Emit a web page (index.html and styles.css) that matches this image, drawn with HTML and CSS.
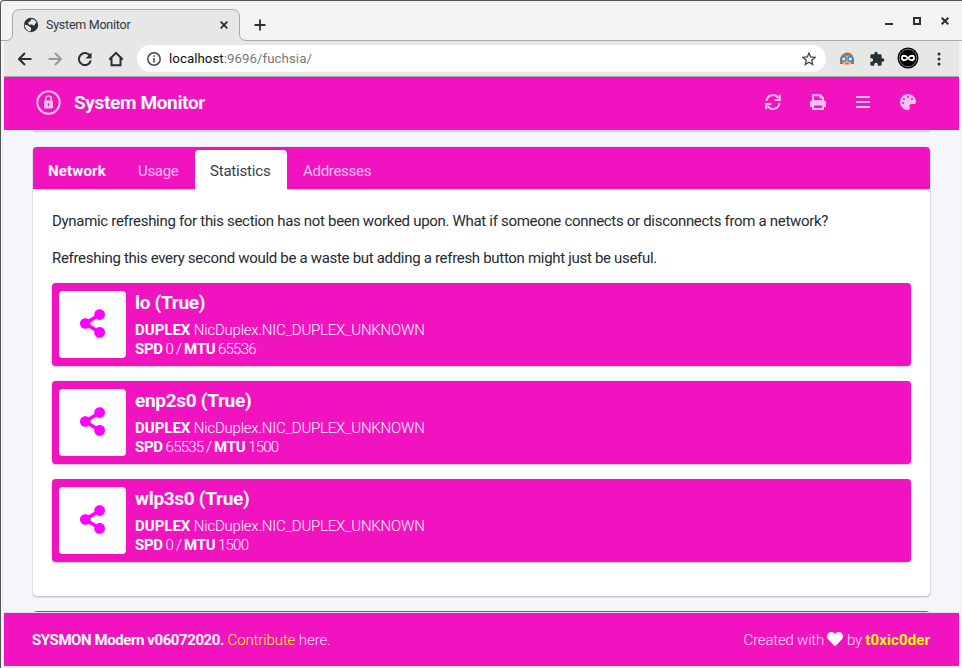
FILE: index.html
```html
<!DOCTYPE html>
<html lang="en">
<head>
<meta charset="utf-8">
<title>System Monitor</title>
<link rel="stylesheet" href="styles.css">
</head>
<body>
<div class="window">
  <div class="tabstrip">
    <svg class="tab-shape" width="252" height="37" viewBox="0 0 252 37"><path class="tab-fill" d="M0 37V31.500H2Q8.500 31.500 8.500 25V8Q8.500 .5 16 .5H228Q235.500 .5 235.500 8V25Q235.500 31.500 243 31.500V32H0Z"/><path class="tab-line" d="M0 31.500H2Q8.500 31.500 8.500 25V8Q8.500 .5 16 .5H228Q235.500 .5 235.500 8V25Q235.500 31.500 243 31.500H252"/></svg>
    <div class="tab">
      <svg class="globe" width="16" height="16" viewBox="0 0 16 16"><circle cx="8" cy="8" r="7.200"/><path d="M8.500 1.700Q12 2.500 13.500 5L11 8.800L9 7.500L6 7.700L5 5.500L7.500 4Z M1.600 7.500L5 8.500L8.300 11L7.500 14.400Q2 13.500 1.600 7.500Z"/></svg>
      <span>System Monitor</span>
      <svg class="tab-close" width="8" height="8" viewBox="0 0 8 8"><path d="M.7.7l6.600 6.600M7.300.7L.7 7.300"/></svg>
    </div>
    <svg class="plus" width="12" height="12" viewBox="0 0 12 12"><path d="M6 .5v11M.5 6h11"/></svg>
    <div class="controls">
      <svg width="8" height="10" viewBox="0 0 8 10"><path d="M0 8h8"/></svg>
      <svg width="8" height="8" viewBox="0 0 8 8"><path d="M1 1h6v6H1z"/></svg>
      <svg width="8" height="8" viewBox="0 0 8 8"><path d="M.7.7l6.600 6.600M7.300.7L.7 7.300"/></svg>
    </div>
  </div>
  <div class="toolbar">
    <svg class="nav" width="14" height="14" viewBox="0 0 14 14"><path d="M13.500 7H1.500M7 1L1 7l6 6"/></svg>
    <svg class="nav dim" width="14" height="14" viewBox="0 0 14 14"><path d="M.5 7h12M7 1l6 6-6 6"/></svg>
    <svg class="nav" width="14" height="14" viewBox="0 0 14 14"><path d="M12 3.800A6 6 0 1 0 12.800 8.500"/><path class="solid" d="M13.500.5v6h-6z"/></svg>
    <svg class="nav home" width="16" height="16" viewBox="0 0 16 16"><path d="M1.300 8.500L8 1.800l6.700 6.700M3.500 7V14.200h9V7"/></svg>
    <div class="url">
      <svg width="14" height="14" viewBox="0 0 14 14"><circle cx="7" cy="7" r="6.200"/><path d="M7 6v4.500M7 3.300v1.500"/></svg>
      <span><b>localhost</b>:9696/fuchsia/</span>
      <svg class="star" width="14" height="14" viewBox="0 0 14 14"><path d="M7 1l1.700 4 4.300.4-3.300 2.800 1 4.300L7 10.200l-3.700 2.300 1-4.300L1 5.400 5.300 5z"/></svg>
    </div>
    <svg class="ext" width="16" height="16" viewBox="0 0 16 16"><path d="M1 13Q.5 2 8 1.500T15 13z" fill="#a96b18"/><ellipse cx="8" cy="9.500" rx="5.200" ry="5" fill="#f3ad80"/><path d="M2.500 6.500L8 3l5.500 3.500V5Q8 0 2.500 5z" fill="#c48429"/><circle cx="4.500" cy="8" r="3.200" fill="#3583d0"/><circle cx="11.500" cy="8" r="3.200" fill="#3583d0"/><circle cx="4.700" cy="8" r="1.700" fill="#c8ebff"/><circle cx="11.300" cy="8" r="1.700" fill="#c8ebff"/><path d="M6.500 12.500h3" stroke="#c75b4b"/></svg>
    <svg class="puzzle" width="16" height="16" viewBox="0 0 24 24"><path d="M20.500 11H19V7c0-1.100-.9-2-2-2h-4V3.500a2.500 2.500 0 0 0-5 0V5H4c-1.100 0-2 .9-2 2v3.800h1.500a2.700 2.700 0 0 1 0 5.400H2V20c0 1.100.9 2 2 2h3.800v-1.500a2.700 2.700 0 0 1 5.400 0V22H17c1.100 0 2-.9 2-2v-4h1.500a2.500 2.500 0 0 0 0-5z"/></svg>
    <svg class="avatar" width="22" height="22" viewBox="0 0 22 22"><circle cx="11" cy="11" r="10.500"/><circle class="ring" cx="11" cy="11" r="8.800"/><path d="M11 11C8.500 8 5 8 5 11s3.500 3 6 0 6-3 6 0-3.500 3-6 0z"/></svg>
    <svg class="dots" width="4" height="14" viewBox="0 0 4 14"><circle cx="2" cy="2" r="1.500"/><circle cx="2" cy="7" r="1.500"/><circle cx="2" cy="12" r="1.500"/></svg>
  </div>
  <div class="page">
    <header class="topbar">
      <svg class="lock" width="26" height="26" viewBox="0 0 26 26"><circle cx="12.500" cy="12.500" r="11.200"/><path class="shackle" d="M9.700 12V8.800a2.800 2.800 0 0 1 5.600 0V12"/><path class="body" fill-rule="evenodd" d="M9 10.500h7q1 0 1 1v6q0 1-1 1H9q-1 0-1-1v-6q0-1 1-1zm2.800 2.700v2.500h1.400v-2.500z"/></svg>
      <h1>System Monitor</h1>
      <div class="actions">
        <svg width="16" height="16" viewBox="0 0 16 16"><path class="line" d="M1.500 7A6.500 6.500 0 0 1 13.500 4.200M14.500 9A6.500 6.500 0 0 1 2.500 11.800M14.800.8v5.200H9.600M1.200 15.200V10h5.200"/></svg>
        <svg width="16" height="16" viewBox="0 0 16 16"><path class="line" d="M3 7V1.300h7.500L13 3.800V7M3 12H1V9q0-1.800 1.800-1.800h10.400Q15 7.200 15 9v3h-2M3 10.500h10v4.500H3z"/><path d="M2 6.500h12l1.500 2V11H.5V8.500zM9.500 1l3.500 3.500H9.500z"/></svg>
        <svg width="16" height="16" viewBox="0 0 16 16"><path class="line" d="M1 3h14M1 8h14M1 13h14"/></svg>
        <svg width="16" height="16" viewBox="0 0 512 512"><path fill-rule="evenodd" d="M204.300 5C104.900 24.400 24.800 104.300 5.200 203.400c-37 187 131.700 326.400 258.800 306.700 41.200-6.400 61.400-54.600 42.500-91.700-23.100-45.400 9.900-98.400 60.900-98.400h79.700c35.800 0 64.800-29.600 64.900-65.300C511.500 97.100 368.100-26.900 204.300 5zM96 320a32 32 0 1 1 0-64 32 32 0 0 1 0 64zm32-128a32 32 0 1 1 0-64 32 32 0 0 1 0 64zm128-64a32 32 0 1 1 0-64 32 32 0 0 1 0 64zm128 64a32 32 0 1 1 0-64 32 32 0 0 1 0 64z"/></svg>
      </div>
    </header>
    <main>
      <div class="previous-card"></div>
      <section class="card">
        <nav><strong>Network</strong><a class="usage">Usage</a><a class="active">Statistics</a><a class="addresses">Addresses</a></nav>
        <div class="card-body">
          <p class="first">Dynamic refreshing for this section has not been worked upon. What if someone connects or disconnects from a network?</p>
          <p class="second">Refreshing this every second would be a waste but adding a refresh button might just be useful.</p>
          <article><div class="thumb"><svg width="25" height="29" viewBox="0 0 448 512"><path d="M352 320c-22.600 0-43.400 7.800-59.800 20.900l-102.500-64a96.500 96.500 0 0 0 0-41.700l102.500-64.100C308.600 184.200 329.400 192 352 192c53 0 96-43 96-96S405 0 352 0s-96 43-96 96c0 7.200.8 14.100 2.300 20.800l-102.500 64.100C139.400 167.800 118.600 160 96 160c-53 0-96 43-96 96s43 96 96 96c22.600 0 43.400-7.800 59.800-20.900l102.500 64.100A96.300 96.300 0 0 0 256 416c0 53 43 96 96 96s96-43 96-96-43-96-96-96z"/></svg></div><div class="info"><h2>lo (True)</h2><div class="row duplex"><b>DUPLEX</b> NicDuplex.NIC_DUPLEX_UNKNOWN</div><div class="row speed"><b>SPD</b> 0 / <b>MTU</b> 65536</div></div></article>
          <article><div class="thumb"><svg width="25" height="29" viewBox="0 0 448 512"><path d="M352 320c-22.600 0-43.400 7.800-59.800 20.900l-102.500-64a96.500 96.500 0 0 0 0-41.700l102.500-64.100C308.600 184.200 329.400 192 352 192c53 0 96-43 96-96S405 0 352 0s-96 43-96 96c0 7.200.8 14.100 2.300 20.800l-102.500 64.100C139.400 167.800 118.600 160 96 160c-53 0-96 43-96 96s43 96 96 96c22.600 0 43.400-7.800 59.800-20.900l102.500 64.100A96.300 96.300 0 0 0 256 416c0 53 43 96 96 96s96-43 96-96-43-96-96-96z"/></svg></div><div class="info"><h2>enp2s0 (True)</h2><div class="row duplex"><b>DUPLEX</b> NicDuplex.NIC_DUPLEX_UNKNOWN</div><div class="row speed"><b>SPD</b> 65535 / <b>MTU</b> 1500</div></div></article>
          <article><div class="thumb"><svg width="25" height="29" viewBox="0 0 448 512"><path d="M352 320c-22.600 0-43.400 7.800-59.800 20.900l-102.500-64a96.500 96.500 0 0 0 0-41.700l102.500-64.100C308.600 184.200 329.400 192 352 192c53 0 96-43 96-96S405 0 352 0s-96 43-96 96c0 7.200.8 14.100 2.300 20.800l-102.500 64.100C139.400 167.800 118.600 160 96 160c-53 0-96 43-96 96s43 96 96 96c22.600 0 43.400-7.800 59.800-20.900l102.500 64.100A96.300 96.300 0 0 0 256 416c0 53 43 96 96 96s96-43 96-96-43-96-96-96z"/></svg></div><div class="info"><h2>wlp3s0 (True)</h2><div class="row duplex"><b>DUPLEX</b> NicDuplex.NIC_DUPLEX_UNKNOWN</div><div class="row speed"><b>SPD</b> 0 / <b>MTU</b> 1500</div></div></article>
        </div>
      </section>
      <div class="next-card"></div>
    </main>
    <footer>
      <div class="version"><b>SYSMON Modern v06072020.</b> <a>Contribute</a> here.</div>
      <div class="credit">Created with <svg width="16" height="16" viewBox="0 0 512 512"><path d="M462.300 62.600C407.500 15.900 326 24.300 275.700 76.200L256 96.500l-19.700-20.300C186.100 24.300 104.500 15.900 49.700 62.600c-62.800 53.600-66.100 149.800-9.900 207.900l193.500 199.800c12.500 12.900 32.800 12.900 45.300 0l193.500-199.800c56.300-58.100 53-154.300-9.800-207.900z"/></svg> by <a><b>t0xic0der</b></a></div>
    </footer>
  </div>
</div>
</body>
</html>
```
FILE: styles.css
```css
* { box-sizing: border-box; }
body { margin: 0; background: #f2f2f2; font-family: Roboto, "Liberation Sans", sans-serif; }
svg { display: block; flex: none; }
.window { width: 962px; height: 668px; overflow: hidden; display: flex; flex-direction: column; border-top: 1px solid #555; border-left: 1px solid #555; border-radius: 4px 0 0 0; padding: 0 3px 2px 3px; background: #f3f3f3; }
.tabstrip { height: 40px; flex: none; position: relative; display: flex; align-items: center; margin-left: -3px; margin-right: -3px; padding: 8px 13px 0 22px; border-bottom: 1px solid #aaa; }
.tab-shape { position: absolute; left: 3px; top: 8px; }
.tab-fill { fill: #e7e7e5; }
.tab-line { fill: none; stroke: #aaa; }
.tab { position: relative; display: flex; align-items: center; width: 205px; font-size: 12.500px; letter-spacing: -.25px; color: #30383b; }
.globe { fill: #293033; margin-right: 7px; }
.globe path { fill: #e7e7e5; }
.tab-close { margin-left: auto; }
.tab-close, .plus, .controls { fill: none; stroke: #293033; stroke-width: 1.800; }
.plus { margin-left: 26px; position: relative; }
.controls { margin-left: auto; display: flex; gap: 20px; align-items: center; margin-top: -7px; stroke-width: 2; }
.toolbar { height: 36px; flex: none; display: flex; align-items: center; background: #e7e7e5; border-bottom: 1px solid #aaa; padding-left: 14px; }
.nav { fill: none; stroke: #293033; stroke-width: 2; margin-right: 16px; }
.nav .solid { fill: #293033; stroke: none; }
.home { margin-right: 13px; }
.dim { stroke: #999; }
.url { width: 689px; height: 27px; border-radius: 14px; background: #fff; display: flex; align-items: center; padding: 0 10px; gap: 8px; color: #777; font-size: 13.300px; letter-spacing: .04px; }
.url b { color: #111; font-weight: 400; }
.url svg { fill: none; stroke: #444; stroke-width: 1.500; }
.url .star { margin-left: auto; stroke-width: 1.300; }
.ext { margin-left: 13px; }
.puzzle { margin-left: 14px; fill: #293033; }
.avatar { margin-left: 12px; fill: #000; margin-top: -2px; }
.avatar .ring { stroke: #aaa; stroke-width: .7; }
.avatar path { fill: none; stroke: #fff; stroke-width: 1.800; }
.dots { margin-left: 18px; fill: #293033; }
.page { flex: 1; min-height: 0; display: flex; flex-direction: column; background: #f4f6fa; font-size: 15px; }
.topbar { height: 53px; flex: none; background: #f213c0; display: flex; align-items: center; padding: 0 43px 2px 32px; }
.lock { fill: none; stroke: #fbc1ee; stroke-width: 2; }
.lock .shackle { stroke-width: 1.500; }
.lock .body { fill: #fbc1ee; stroke: none; }
h1 { margin: 1px 0 0 12px; font-size: 19px; line-height: 24px; font-weight: 700; color: #fff; letter-spacing: -.35px; }
.actions { margin: -1px 0 0 auto; display: flex; gap: 29px; fill: #fbc1ee; }
.actions .line { fill: none; stroke: #fbc1ee; stroke-width: 2; }
main { flex: 1; min-height: 0; overflow: hidden; padding: 0 29px; }
.previous-card { height: 1px; margin-bottom: 16px; background: #dfe1e4; box-shadow: 0 1px 1px #ccc; }
.card { height: 449px; background: #fff; border-radius: 4px; box-shadow: 0 0 1px rgba(0,0,0,.25), 0 1px 2px rgba(0,0,0,.25); }
nav { height: 43px; background: #f213c0; border-radius: 4px 4px 0 0; border-bottom: 1px solid #e1dfe2; display: flex; align-items: flex-end; color: #fbc1ee; letter-spacing: -.3px; }
nav strong { color: #fff; width: 90px; padding-left: 15px; line-height: 35px; letter-spacing: .15px; }
nav a { line-height: 35px; padding-left: 15px; }
nav .usage { width: 72px; }
nav .active { width: 92px; height: 40px; line-height: 42px; background: #fff; color: #34404b; border-radius: 4px 4px 0 0; margin-bottom: -1px; letter-spacing: -.2px; }
nav .addresses { padding-left: 16px; }
.card-body { padding: 19px 19px 0; color: #252a2f; }
p { margin: 0 0 13px; line-height: 24px; white-space: nowrap; letter-spacing: -.31px; }
article { height: 83px; margin-bottom: 15px; background: #f213c0; border-radius: 4px; box-shadow: 0 0 1px rgba(0,0,0,.2), 0 1px 2px rgba(0,0,0,.22); display: flex; padding: 8px 7px; color: #fff; }
.thumb { width: 67px; height: 67px; border-radius: 4px; background: #fff; display: grid; place-items: center; padding-bottom: 2px; fill: #f0f; }
.info { padding-left: 9px; font-weight: 300; }
h2 { margin: 0 0 7px; font-size: 19px; line-height: 23px; font-weight: 700; letter-spacing: -.3px; }
.row { line-height: 19px; }
.row b { font-weight: 700; }
.duplex { letter-spacing: -.22px; }
.duplex b { letter-spacing: 0; }
.speed { letter-spacing: -.8px; }
.speed b { letter-spacing: -.3px; }
.next-card { height: 10px; margin-top: 15px; border-radius: 4px; background: #f213c0; }
footer { height: 53px; flex: none; display: flex; align-items: center; justify-content: space-between; padding: 0 29px 0 28px; background: #f213c0; color: #fde0f7; box-shadow: 0 -1px #dee2e6; position: relative; font-weight: 300; letter-spacing: -.1px; }
footer b { color: #fff; font-weight: 700; }
.version b { letter-spacing: -.42px; }
footer a, footer a b { color: #ff0; }
.credit { letter-spacing: -.2px; }
.credit b { letter-spacing: 0.1px; }
.credit svg { display: inline-block; fill: #fff; vertical-align: -2px; }
```
